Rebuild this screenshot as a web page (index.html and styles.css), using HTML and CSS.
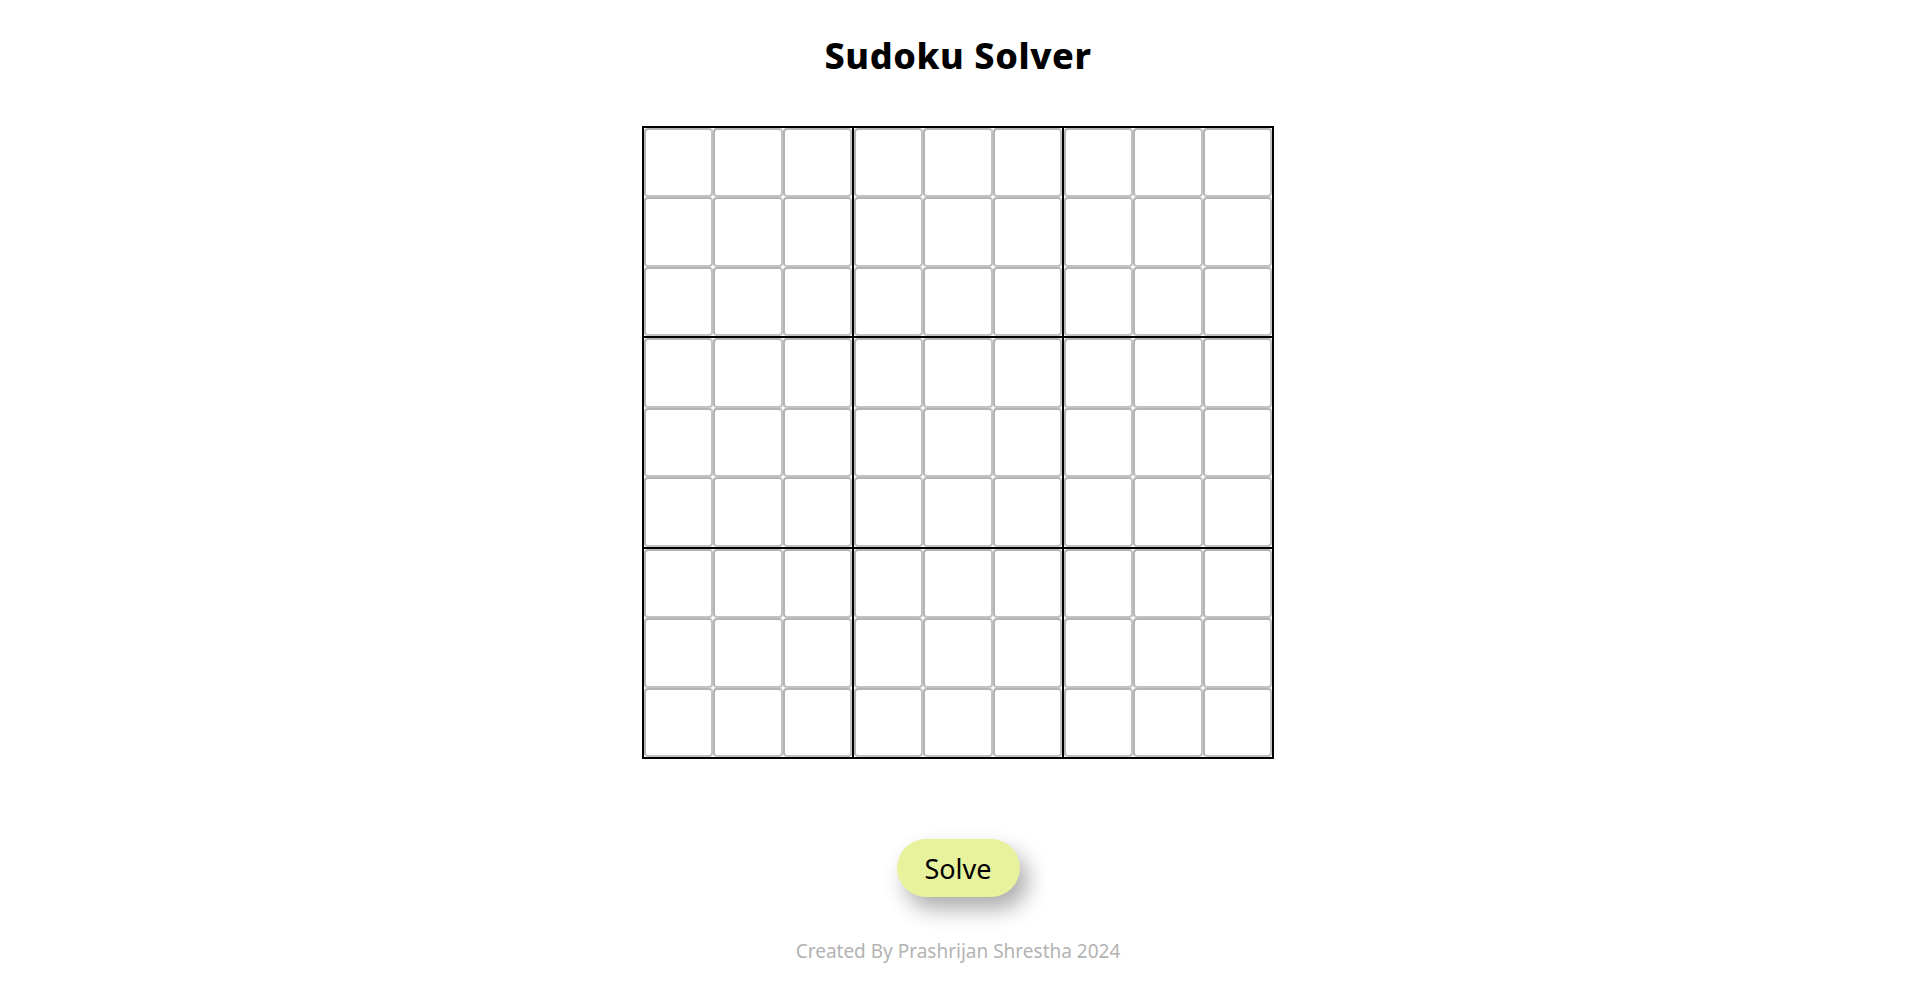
FILE: index.html
```html
<!DOCTYPE html>
<html lang="en">
<head>
<meta charset="utf-8">
<title>Sudoku Solver</title>
<link rel="stylesheet" href="styles.css">
</head>
<body>
<main class="page">
  <h1 class="title">Sudoku Solver</h1>
  <div class="board" id="board"></div>
  <button class="solve">Solve</button>
  <p class="credit">Created By Prashrijan Shrestha 2024</p>
</main>
<script src="app.js"></script>
</body>
</html>
```
FILE: styles.css
```css
* { box-sizing: border-box; }
body {
  margin: 0;
  background: #fff;
  font-family: "Noto Sans", "Open Sans", sans-serif;
}
.page {
  display: flex;
  flex-direction: column;
  align-items: center;
}
.title {
  margin: 36px 0 0;
  font-family: "Noto Sans", sans-serif;
  font-weight: 800;
  font-size: 36px;
  line-height: 40px;
  letter-spacing: 0.6px;
  color: #000;
}
.board {
  margin-top: 50px;
  width: 632px;
  height: 633px;
  border: 2px solid #000;
  background: #000;
  display: grid;
  grid-template-columns: repeat(3, 1fr);
  grid-template-rows: repeat(3, 1fr);
  gap: 2px;
}
.block {
  background: #fff;
  display: grid;
  grid-template-columns: repeat(3, 1fr);
  grid-template-rows: repeat(3, 1fr);
}
.cell {
  width: 100%;
  height: 100%;
  margin: 0;
  padding: 0;
  border: 2px solid #c2c2c2;
  border-top-color: #b4b4b4;
  border-left-color: #b4b4b4;
  border-radius: 4px;
  background: #fff;
  text-align: center;
  font-family: "Noto Sans", sans-serif;
  font-size: 28px;
  outline: none;
}
.solve {
  margin-top: 80px;
  width: 123px;
  height: 58px;
  border: none;
  border-radius: 29px;
  background: #e8f19c;
  color: #000;
  font-family: "Noto Sans", sans-serif;
  font-size: 27px;
  line-height: 1;
  box-shadow: 8px 12px 22px rgba(0, 0, 0, 0.33);
  cursor: pointer;
}
.credit {
  margin: 42px 0 0;
  font-family: "Noto Sans", sans-serif;
  font-size: 19px;
  line-height: 24px;
  color: #b3b3b3;
}
```
FILE: app.js
```js
const board = document.getElementById('board');
for (let b = 0; b < 9; b++) {
  const block = document.createElement('div');
  block.className = 'block';
  for (let c = 0; c < 9; c++) {
    const input = document.createElement('input');
    input.className = 'cell';
    input.type = 'text';
    input.maxLength = 1;
    block.appendChild(input);
  }
  board.appendChild(block);
}
```
